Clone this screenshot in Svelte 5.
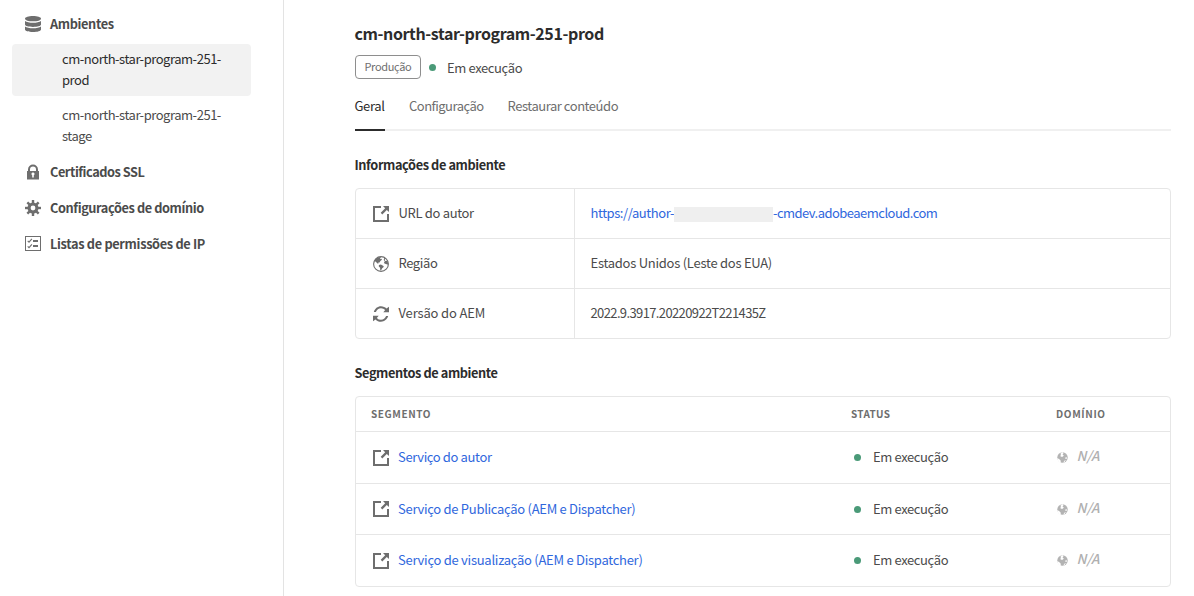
<script>
  const info = [
    { icon: 'link', label: 'URL do autor', ls: -0.33 },
    { icon: 'globe', label: 'Região', ls: -0.4, value: 'Estados Unidos (Leste dos EUA)', vls: -0.26 },
    { icon: 'refresh', label: 'Versão do AEM', ls: -0.16, value: '2022.9.3917.20220922T221435Z', vls: -0.62 }
  ];
  const segments = [
    { name: 'Serviço do autor', ls: -0.37 },
    { name: 'Serviço de Publicação (AEM e Dispatcher)', ls: -0.285 },
    { name: 'Serviço de visualização (AEM e Dispatcher)', ls: -0.265 }
  ];
  const settings = [
    { icon: 'lock', label: 'Certificados SSL', ls: -0.45 },
    { icon: 'gear', label: 'Configurações de domínio', ls: -0.4 },
    { icon: 'list', label: 'Listas de permissões de IP', ls: -0.32 }
  ];
  const teeth = [0, 45, 90, 135, 180, 225, 270, 315];
</script>

{#snippet t(text, ls)}<span style:letter-spacing="{ls}px">{text}</span>{/snippet}

{#snippet icon(name)}
  <svg class="icon" viewBox="0 0 16 16" width="16" height="16" aria-hidden="true">
    {#if name === 'data'}
      <path d="M0 2.700C0 1.100 3.600 0 8 0s8 1.100 8 2.700S12.400 5.300 8 5.300 0 4.300 0 2.700z" />
      <path d="M0 4.900c1.500 1.200 4.500 1.800 8 1.800s6.500-.6 8-1.800v3.600c0 1.500-3.600 2.400-8 2.400S0 10 0 8.500z" />
      <path d="M0 10.400c1.500 1.200 4.500 1.800 8 1.800s6.500-.6 8-1.800v3.100c0 1.600-3.600 2.500-8 2.500s-8-.9-8-2.500z" />
    {:else if name === 'lock'}
      <path fill-rule="evenodd" d="M2 7h1V5.500a5 5 0 0 1 10 0V7h1v8.500H2zM5 7h6V5.500a3 3 0 0 0-6 0zM8 8.500a1.500 1.500 0 0 0-.8 2.800V13.500h1.600v-2.200A1.500 1.500 0 0 0 8 8.500z" />
    {:else if name === 'gear'}
      <path fill-rule="evenodd" d="M8 2.500a5.500 5.500 0 1 0 0 11 5.500 5.500 0 0 0 0-11zm0 3.100a2.400 2.400 0 1 1 0 4.800 2.400 2.400 0 0 1 0-4.800z" />
      {#each teeth as a}<path d="M6.800 0h2.400v3.300H6.800z" transform="rotate({a} 8 8)" />{/each}
    {:else if name === 'list'}
      <path fill-rule="evenodd" d="M0 0h16v15H0zM1 1v13h14V1z" />
      <path d="M8 4h5v2H8zM8 9h5v2H8z" />
      <path class="stroke" d="M2.700 4.800l1.300 1.300 2.900-3.300M2.700 10.300l1.300 1.300 2.900-3.300" />
    {:else if name === 'link'}
      <path d="M0 0h8v2H2v12h12V8h2v8H0z" />
      <path d="M10 0h6v6l-2.200-2.100-4.500 4.500-1.600-1.600 4.500-4.500z" />
    {:else if name === 'globe'}
      <circle class="stroke" cx="8" cy="8" r="7.400" />
      <path d="M1.900 3.600C3.300 1.800 5.300.8 7.600.9l.3.900-1 .5.700.8 1.100-.3.200 1-1.500 1.100-.9 1.500-1.500.3.500 1.300-1.300-.7-1.600-1.700-.8.200z" />
      <path d="M5.900 8.900l2-.4 2.600 1.500.2 1-1.500 1.300-1.200 2.200-.8-.3-.1-2.500-1.300-1.300z" />
      <path d="M11.400 1.600l1.100 1-.8 1.300.6 1 1.900-.1.900 2.500-.7 1.700-1.100-1.100-1.600-.1-.7-1.300.8-1.300-1.100-1.200z" />
    {:else}
      <path d="M.8 6C1.800 2.600 4.600.3 8 .3c2.200 0 4.100.9 5.500 2.300L16 .7v5.500h-5.700l1.900-2.100A5.800 5.800 0 0 0 8 2.200C5.700 2.200 3.800 3.700 2.900 6z" />
      <path d="M15.200 10c-1 3.400-3.800 5.700-7.200 5.700-2.200 0-4.100-.9-5.500-2.300L0 15.300V9.800h5.700l-1.900 2.100A5.800 5.800 0 0 0 8 13.800c2.300 0 4.200-1.500 5.100-3.800z" />
    {/if}
  </svg>
{/snippet}

<div class="app">
  <nav>
    <div class="group first">{@render icon('data')}{@render t('Ambientes', -0.37)}</div>
    <div class="env selected">{@render t('cm-north-star-program-251-prod', -0.47)}</div>
    <div class="env">{@render t('cm-north-star-program-251-stage', -0.47)}</div>
    {#each settings as s}
      <div class="group">{@render icon(s.icon)}{@render t(s.label, s.ls)}</div>
    {/each}
  </nav>
  <main>
    <h1>{@render t('cm-north-star-program-251-prod', -0.4)}</h1>
    <div class="state">
      <span class="badge">{@render t('Produção', -0.34)}</span>
      <i class="dot"></i>
      <span class="running">{@render t('Em execução', -0.38)}</span>
    </div>
    <div class="tabs">
      <div class="tab active">{@render t('Geral', -0.35)}</div>
      <div class="tab">{@render t('Configuração', -0.52)}</div>
      <div class="tab">{@render t('Restaurar conteúdo', -0.46)}</div>
    </div>

    <h2>{@render t('Informações de ambiente', -0.39)}</h2>
    <div class="table">
      {#each info as row}
        <div class="info">
          <div class="label">{@render icon(row.icon)}{@render t(row.label, row.ls)}</div>
          <div class="value">
            {#if row.value}{@render t(row.value, row.vls)}
            {:else}
              <a href="#author">{@render t('https://author-', -0.44)}<i class="mask"></i>{@render t('-cmdev.adobeaemcloud.com', -0.53)}</a>
            {/if}
          </div>
        </div>
      {/each}
    </div>

    <h2 class="second">{@render t('Segmentos de ambiente', -0.4)}</h2>
    <div class="table">
      <div class="seg head">
        <div>{@render t('SEGMENTO', 0.58)}</div>
        <div>{@render t('STATUS', 0.33)}</div>
        <div>{@render t('DOMÍNIO', 0.65)}</div>
      </div>
      {#each segments as s}
        <div class="seg body">
          <div class="name">{@render icon('link')}<a href="#segment">{@render t(s.name, s.ls)}</a></div>
          <div class="status"><i class="dot"></i>{@render t('Em execução', -0.38)}</div>
          <div class="domain">
            <svg viewBox="0 0 11 11" width="11" height="11" aria-hidden="true">
              <circle cx="5.500" cy="5.500" r="5.200" />
              <path class="sea" d="M5.200 0l1.300 1.300-1 1.200 1.300.9-1.100 1.300-1.500.1-1-.9 1-1.200L3.300 2z" />
              <path class="sea" d="M0 6.200l1.700.6 1.800 1.500.5 2.700-2.400-1.300z" />
              <path class="sea" d="M8.500 5.300l1.700.3-.5 1.100-1.300.2zM7.600 8.400l1.300-.3-1.800 2.700-.7-.5z" />
            </svg>
            <em>{@render t('N/A', 0)}</em>
          </div>
        </div>
      {/each}
    </div>
  </main>
</div>

<style>
  :global(body) { margin: 0; background: #fff; }
  .app {
    display: flex;
    height: 596px;
    overflow: hidden;
    box-sizing: border-box;
    font: 13px/21px "Noto Sans CJK SC", sans-serif;
    color: #4b4b4b;
  }
  nav {
    width: 283px;
    flex: none;
    box-sizing: content-box;
    border-right: 1px solid #e3e3e3;
    padding-top: 6px;
  }
  .icon { flex: none; display: block; fill: #6e6e6e; }
  .stroke { fill: none; stroke: #6e6e6e; stroke-width: 1.1; }
  .group {
    display: flex;
    align-items: center;
    gap: 9px;
    height: 36px;
    padding-left: 25px;
    font-weight: 700;
    font-size: 12.75px;
  }
  .group span, .label span, .value span, .seg span { padding-bottom: 2px; }
  .group.first { margin-bottom: 2px; }
  .env {
    box-sizing: border-box;
    width: 239px;
    height: 52px;
    margin: 0 0 4px 12px;
    padding: 4px 20px 6px 50px;
    border-radius: 4px;
  }
  .env:nth-child(3) { margin-bottom: 2px; }
  .selected { background: #f2f2f2; color: #2c2c2c; }
  main { width: 816px; flex: none; padding: 21px 0 0 71px; }
  h1 { margin: 0; font-size: 16px; line-height: 24px; height: 34px; color: #2c2c2c; text-indent: -0.5px; }
  .state { display: flex; align-items: center; height: 24px; }
  .badge {
    box-sizing: border-box;
    width: 66px;
    height: 24px;
    line-height: 20px;
    border: 1px solid #8e8e8e;
    border-radius: 4px;
    padding-left: 8.500px;
    font-size: 11px;
    color: #6e6e6e;
  }
  .dot { display: block; width: 7px; height: 7px; border-radius: 50%; background: #4a9a78; flex: none; }
  .state .dot { margin: 0 11px 0 8px; }
  .tabs {
    display: flex;
    gap: 24px;
    height: 35px;
    margin-top: 15px;
    border-bottom: 2px solid #f0f0f0;
  }
  .tab { height: 35px; line-height: 24px; color: #6e6e6e; white-space: nowrap; }
  .active { width: 30px; border-bottom: 2px solid #2c2c2c; color: #2c2c2c; text-indent: -0.5px; }
  h2 { margin: 23px 0 12px; font-size: 12.75px; line-height: 22px; color: #2c2c2c; text-indent: -0.5px; }
  .second { margin-top: 23px; }
  .table { border: 1px solid #e6e6e6; border-radius: 4px; }
  .info { display: grid; grid-template-columns: 219px 1fr; height: 49px; }
  .info + .info, .seg + .seg { border-top: 1px solid #e6e6e6; }
  .label { display: flex; align-items: center; gap: 9.500px; padding-left: 17px; border-right: 1px solid #e6e6e6; }
  .value { display: flex; align-items: center; padding-left: 15.500px; }
  a { color: #3067dd; text-decoration: none; display: flex; align-items: center; white-space: nowrap; }
  .mask { display: block; width: 99px; height: 15px; margin-top: 2px; background: #efefef; }
  .seg { display: grid; grid-template-columns: 480px 205px 1fr; height: 51px; padding-left: 15px; }
  .seg:nth-child(3) { height: 50px; }
  .seg > div { display: flex; align-items: center; }
  .head { height: 34px; font-size: 10px; font-weight: 700; color: #6e6e6e; }
  .name { gap: 9px; padding-left: 2px; }
  .status .dot { margin: 0 12px 0 3px; }
  .domain { gap: 8.500px; padding-left: 1px; color: #b0b0b0; }
  .domain svg { fill: #b3b3b3; }
  .domain .sea { fill: #fff; }
  .domain em { margin-top: -4px; font-size: 13.500px; font-weight: 500; }
</style>
